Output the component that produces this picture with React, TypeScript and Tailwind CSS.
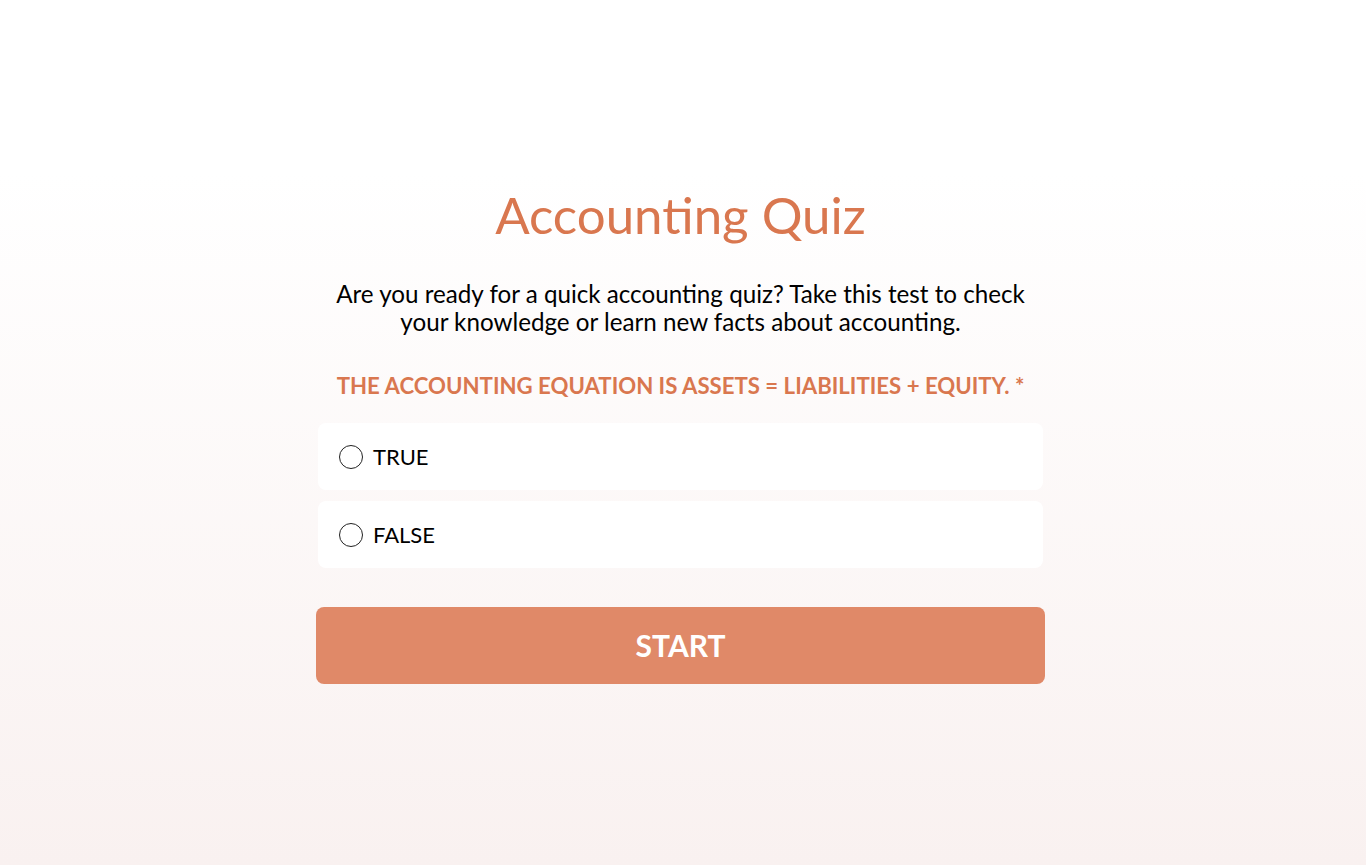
import { useState } from "react";

const options = ["TRUE", "FALSE"];

export default function App() {
  const [picked, setPicked] = useState<string | null>(null);

  return (
    <div
      className="min-h-screen w-full bg-gradient-to-b from-white from-20% to-[#f9f1f0] flex justify-center pr-[5px]"
      style={{ fontFamily: "Lato, 'Open Sans', sans-serif" }}
    >
      <div className="w-[729px] flex flex-col items-center pt-[183px]">
        <h1 className="text-[51px] leading-[64px] text-[#d9774f] font-normal">Accounting Quiz</h1>

        <p className="mt-[33px] text-[24.2px] leading-[28px] text-black text-center w-[700px]">
          Are you ready for a quick accounting quiz? Take this test to check your knowledge or learn new facts about
          accounting.
        </p>

        <div className="mt-[36px] text-[22.2px] leading-[28px] font-bold text-[#d9774f] uppercase">
          The accounting equation is Assets = Liabilities + Equity. *
        </div>

        <div className="mt-[23px] w-[725px] flex flex-col gap-[11px]">
          {options.map((opt) => (
            <label
              key={opt}
              className="h-[67px] bg-white rounded-[8px] flex items-center pl-[21px] gap-[10px] cursor-pointer"
            >
              <span className="w-[24px] h-[24px] rounded-full border-[1.5px] border-[#222] flex items-center justify-center">
                {picked === opt && <span className="w-[12px] h-[12px] rounded-full bg-[#d9774f]" />}
              </span>
              <input
                type="radio"
                name="answer"
                className="hidden"
                checked={picked === opt}
                onChange={() => setPicked(opt)}
              />
              <span className="text-[22px] text-black">{opt}</span>
            </label>
          ))}
        </div>

        <button className="mt-[39px] w-[729px] h-[77px] rounded-[8px] bg-[#e08968] text-white text-[30px] font-bold">
          START
        </button>
      </div>
    </div>
  );
}
